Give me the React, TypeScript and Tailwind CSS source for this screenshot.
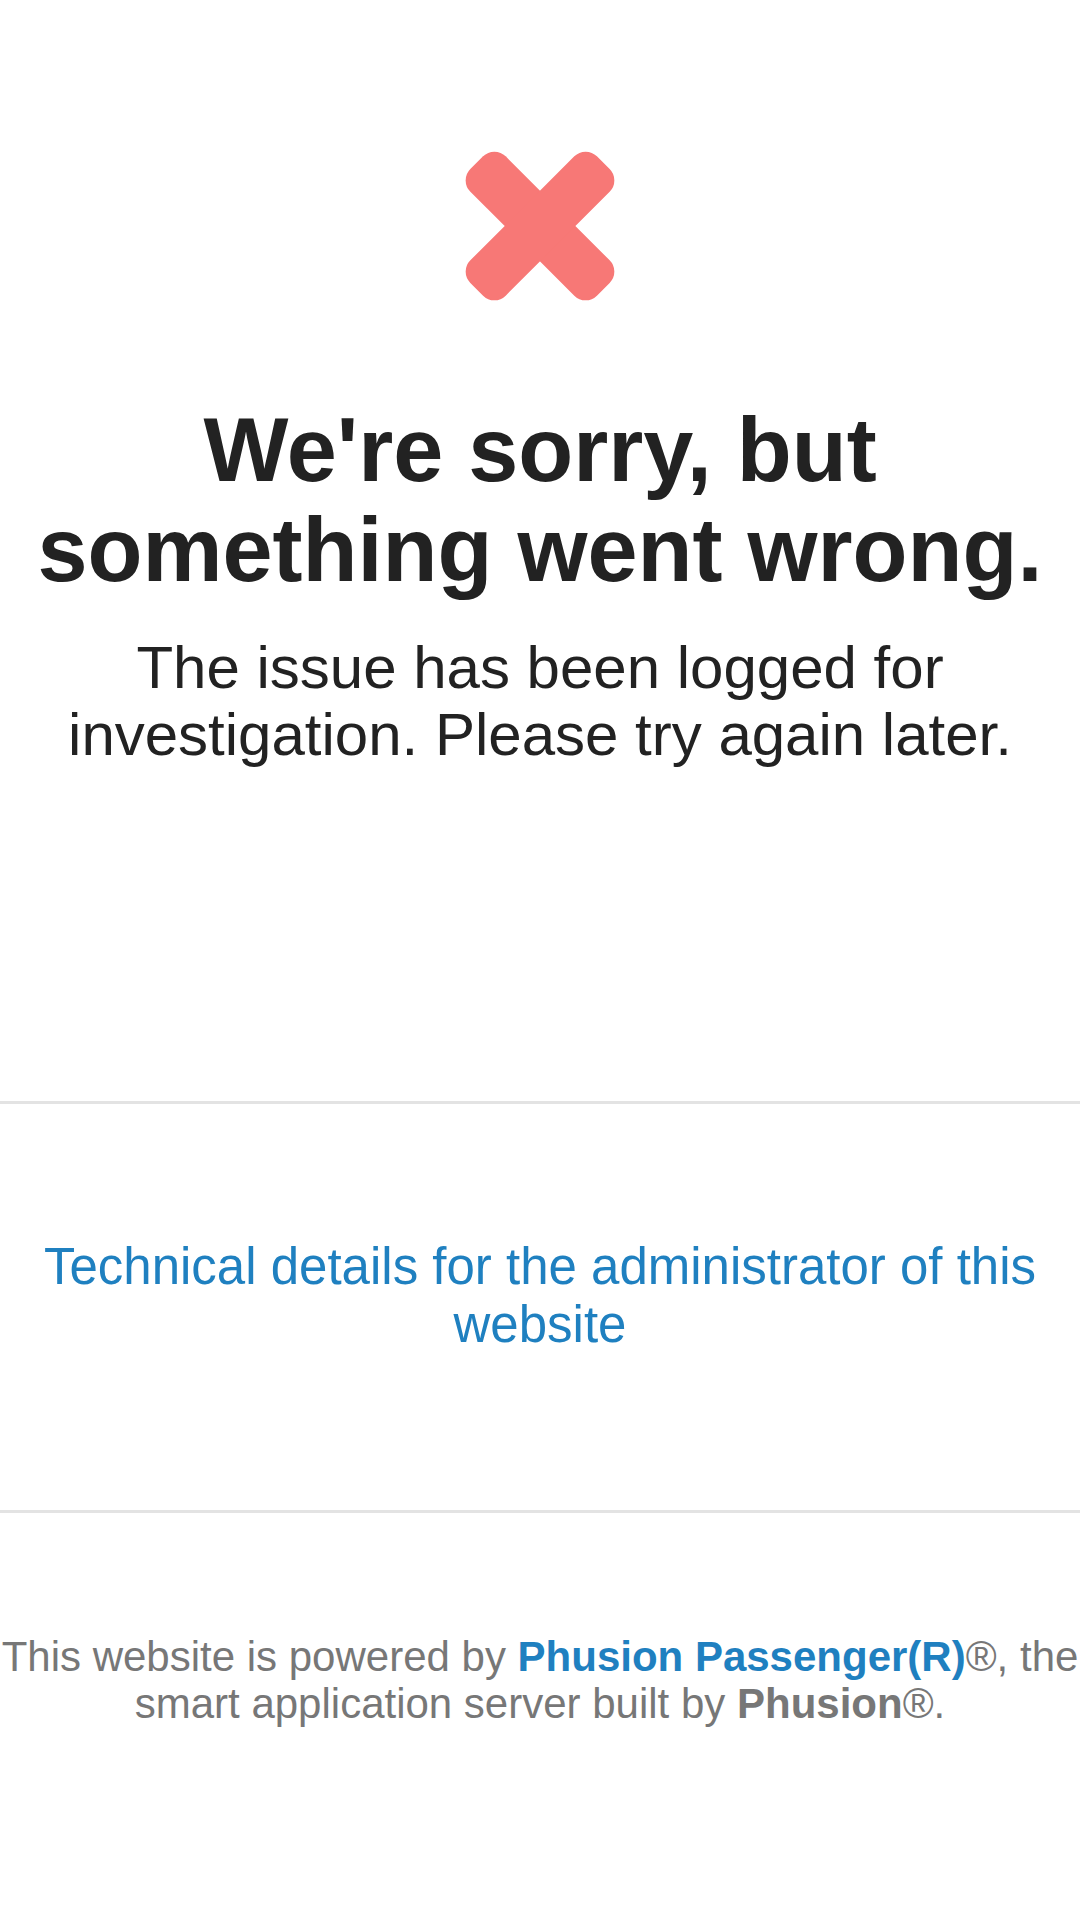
export default function App() {
  return (
    <div className="min-h-[1920px] w-[1080px] bg-white text-center font-['Liberation_Sans',Arial,sans-serif] text-[#222]">
      <div className="flex flex-col items-center pt-[151px]">
        <svg width="150" height="150" viewBox="0 0 150 150" aria-hidden="true">
          <g fill="#f77876">
            <rect x="-14.5" y="50" width="179" height="50" rx="16" transform="rotate(45 75 75)" />
            <rect x="-14.5" y="50" width="179" height="50" rx="16" transform="rotate(-45 75 75)" />
          </g>
        </svg>
        <h1 className="mt-[99px] text-[90px] font-bold leading-[100px]">
          We're sorry, but
          <br />
          something went wrong.
        </h1>
        <p className="mt-[34px] px-[40px] text-[60px] leading-[67px]">
          The issue has been logged for investigation. Please try again later.
        </p>
      </div>

      <div className="mt-[333px] border-t-[3px] border-[#e3e3e3]" />

      <div className="px-[30px] pt-[134px] pb-[156px]">
        <a href="#" className="text-[51px] leading-[58px] text-[#1f80c0]">
          Technical details for the administrator of this website
        </a>
      </div>

      <div className="border-t-[3px] border-[#e3e3e3]" />

      <p className="mt-[120px] text-[42px] leading-[47px] text-[#777]">
        This website is powered by{' '}
        <a href="#" className="font-bold text-[#1f80c0]">Phusion Passenger(R)</a>®, the smart application server built by{' '}
        <b>Phusion</b>®.
      </p>
    </div>
  )
}
